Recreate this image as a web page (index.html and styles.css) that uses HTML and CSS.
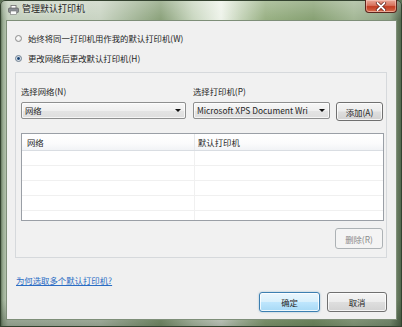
FILE: index.html
```html
<!DOCTYPE html>
<html lang="zh-CN">
<head>
<meta charset="utf-8">
<title>管理默认打印机</title>
<link rel="stylesheet" href="styles.css">
</head>
<body>
<div class="window">
  <div class="titlebar">
    <svg class="ticon" width="11" height="10" viewBox="0 0 11 10">
      <rect x="3" y="0.5" width="5" height="3" fill="#fff" stroke="#6d6d6d" stroke-width="0.8"/>
      <rect x="0.5" y="3" width="10" height="4.5" rx="1" fill="#8a8f94" stroke="#555" stroke-width="0.6"/>
      <rect x="2.5" y="6" width="6" height="3.5" fill="#fafafa" stroke="#777" stroke-width="0.6"/>
    </svg>
    <span class="title">管理默认打印机</span>
    <div class="close">
      <svg width="12" height="9" viewBox="0 0 12 9">
        <path d="M2.5 1 L9.5 8 M9.5 1 L2.5 8" stroke="#5a1a12" stroke-width="3.2" stroke-linecap="round"/>
        <path d="M2.5 1 L9.5 8 M9.5 1 L2.5 8" stroke="#fff" stroke-width="1.8" stroke-linecap="round"/>
      </svg>
    </div>
  </div>
  <div class="client">
    <div class="radio-row"><span class="radio"></span><span>始终将同一打印机用作我的默认打印机(W)</span></div>
    <div class="radio-row second"><span class="radio checked"></span><span>更改网络后更改默认打印机(H)</span></div>
    <div class="panel">
      <div class="fields">
        <div class="field net">
          <div class="label">选择网络(N)</div>
          <div class="combo"><span class="ctext">网络</span><span class="arrow"></span></div>
        </div>
        <div class="field prn">
          <div class="label">选择打印机(P)</div>
          <div class="prow">
            <div class="combo c2"><span class="ctext">Microsoft XPS Document Wri</span><span class="arrow"></span></div>
            <div class="btn add">添加(A)</div>
          </div>
        </div>
      </div>
      <div class="list">
        <div class="lhead"><div class="col first">网络</div><div class="col">默认打印机</div></div>
        <div class="lrow"><div class="cell first"></div><div class="cell"></div></div>
        <div class="lrow"><div class="cell first"></div><div class="cell"></div></div>
        <div class="lrow"><div class="cell first"></div><div class="cell"></div></div>
        <div class="lrow"><div class="cell first"></div><div class="cell"></div></div>
        <div class="lrow last"><div class="cell first"></div><div class="cell"></div></div>
      </div>
      <div class="delrow"><div class="btn disabled del">删除(R)</div></div>
    </div>
    <a class="link" href="#">为何选取多个默认打印机?</a>
    <div class="footer">
      <div class="btn default ok">确定</div>
      <div class="btn cancel">取消</div>
    </div>
  </div>
</div>
</body>
</html>
```

FILE: styles.css
```css
* { box-sizing: border-box; }
html, body { margin: 0; padding: 0; }
body {
  width: 402px;
  height: 327px;
  overflow: hidden;
  font-family: "Noto Sans CJK SC", "Noto Sans", sans-serif;
  font-size: 8.4px;
  color: #262626;
  background: #5d7356;
}
.window {
  width: 402px;
  height: 327px;
  display: flex;
  flex-direction: column;
  padding: 0 5px 7px 6px;
  border-radius: 5px 5px 0 0;
  background:
    linear-gradient(180deg, rgba(255,255,255,0.25) 0px, rgba(255,255,255,0) 20px, rgba(0,0,0,0) 300px, rgba(30,45,28,0.35) 327px),
    linear-gradient(90deg, #4f6249 0px, #9aac93 3px, #c3cfbd 8px, #c9d4c3 25%, #a7b99c 33%, #8aa17a 40%, #c9d7c0 48%, #eef3ea 55%, #c4d3b8 60%, #98b083 66%, #86a072 78%, #a3b795 88%, #8ea385 97%, #4f6249 100%);
  box-shadow: inset 0 0 0 1px #33422f;
}
.titlebar {
  height: 20px;
  display: flex;
  align-items: center;
}
.ticon {
  margin-left: 2px;
  margin-bottom: 1px;
  flex: none;
}
.title {
  margin-left: 3px;
  font-size: 9px;
  line-height: 12px;
  color: #222;
  margin-bottom: 2px;
  text-shadow: 0 0 4px rgba(255,255,255,0.9);
}
.close {
  margin-left: auto;
  align-self: flex-start;
  width: 32px;
  height: 13px;
  border: 1px solid #5b241c;
  border-top: none;
  border-radius: 0 0 4px 4px;
  background: linear-gradient(180deg, #e9a797 0%, #d8735d 45%, #c23d22 55%, #cf5a3c 85%, #e4876a 100%);
  display: flex;
  align-items: center;
  justify-content: center;
  box-shadow: inset 0 0 0 1px rgba(255,220,210,0.45);
}
.client {
  flex: 1;
  display: flex;
  flex-direction: column;
  background: #f0f0f0;
  border: 1px solid #7e8e78;
  padding: 11px 9px 7px 8px;
}
.radio-row {
  height: 12px;
  line-height: 12px;
  display: flex;
  align-items: center;
}
.radio-row.second { margin-top: 8px; }
.radio {
  width: 7px;
  height: 7px;
  border-radius: 50%;
  border: 1px solid #8d8d8d;
  background: radial-gradient(circle at 40% 40%, #ffffff 0%, #e6e6e6 70%, #d0d0d0 100%);
  margin-right: 6px;
  flex: none;
}
.radio.checked {
  border-color: #6f7f8f;
  background: radial-gradient(circle, #1d3b5e 0%, #2e5a8c 35%, #cfd8e2 45%, #eef2f5 100%);
}
.panel {
  margin-top: 8px;
  border: 1px solid #d6d9dc;
  background: #f1f1f1;
  padding: 13px 2px 8px 5px;
  display: flex;
  flex-direction: column;
}
.fields {
  display: flex;
}
.field.net {
  width: 165px;
  margin-right: 7px;
}
.label {
  line-height: 11px;
  height: 11px;
  margin-bottom: 5px;
  white-space: nowrap;
}
.combo {
  height: 17px;
  border: 1px solid #8e8f8f;
  border-radius: 2px;
  background: linear-gradient(180deg, #f7f7f7 0%, #efefef 50%, #e4e4e4 51%, #dedede 100%);
  display: flex;
  align-items: center;
  padding-left: 3px;
  box-shadow: inset 0 0 0 1px rgba(255,255,255,0.7);
}
.ctext {
  flex: 1;
  white-space: nowrap;
  line-height: 15px;
}
.arrow {
  flex: none;
  width: 0;
  height: 0;
  border-left: 3px solid transparent;
  border-right: 3px solid transparent;
  border-top: 3px solid #111;
  margin: 0 4px 0 4px;
}
.prow {
  display: flex;
  align-items: flex-start;
}
.combo.c2 {
  width: 137px;
  margin-right: 6px;
}
.btn {
  display: flex;
  align-items: center;
  justify-content: center;
  border: 1px solid #707070;
  border-radius: 3px;
  background: linear-gradient(180deg, #f4f4f4 0%, #ececec 48%, #dedede 52%, #d2d2d2 100%);
  box-shadow: inset 0 0 0 1px rgba(255,255,255,0.75);
  white-space: nowrap;
  line-height: 12px;
}
.btn.add {
  width: 47px;
  height: 19px;
}
.list {
  margin-top: 12px;
  height: 88px;
  border: 1px solid #9a9fa6;
  background: #fff;
  overflow: hidden;
}
.lhead {
  height: 17px;
  display: flex;
  border-bottom: 1px solid #d9dde2;
  background: linear-gradient(180deg, #ffffff 0%, #fbfbfc 60%, #f1f3f6 100%);
}
.col {
  line-height: 16px;
  padding-left: 5px;
  flex: 1;
}
.col.first {
  flex: none;
  width: 173px;
  border-right: 1px solid #e6e8ea;
}
.col + .col { padding-left: 3px; }
.lrow {
  height: 15px;
  display: flex;
  border-bottom: 1px solid #f0f0f0;
}
.lrow.last { border-bottom: none; }
.cell { flex: 1; }
.cell.first {
  flex: none;
  width: 173px;
  border-right: 1px solid #f0f0f0;
}
.delrow {
  margin-top: 7px;
  display: flex;
  justify-content: flex-end;
  padding-right: 1px;
}
.btn.del {
  width: 48px;
  height: 21px;
}
.btn.disabled {
  border-color: #adb2b5;
  background: #f4f4f4;
  color: #8a8a8a;
  box-shadow: none;
}
.link {
  margin-top: 16px;
  margin-left: 1px;
  line-height: 12px;
  height: 12px;
  color: #2a6cc4;
  text-decoration: underline;
  align-self: flex-start;
}
.footer {
  margin-top: 6px;
  display: flex;
  justify-content: flex-end;
  gap: 7px;
}
.footer .btn {
  height: 20px;
}
.btn.ok {
  width: 61px;
  border-color: #3c7fb1;
  background: linear-gradient(180deg, #eaf6fd 0%, #d9f0fc 48%, #bee6fd 52%, #a7d9f5 100%);
  box-shadow: inset 0 0 0 1px rgba(255,255,255,0.8), 0 0 2px rgba(60,127,177,0.5);
}
.btn.cancel {
  width: 60px;
}
```
